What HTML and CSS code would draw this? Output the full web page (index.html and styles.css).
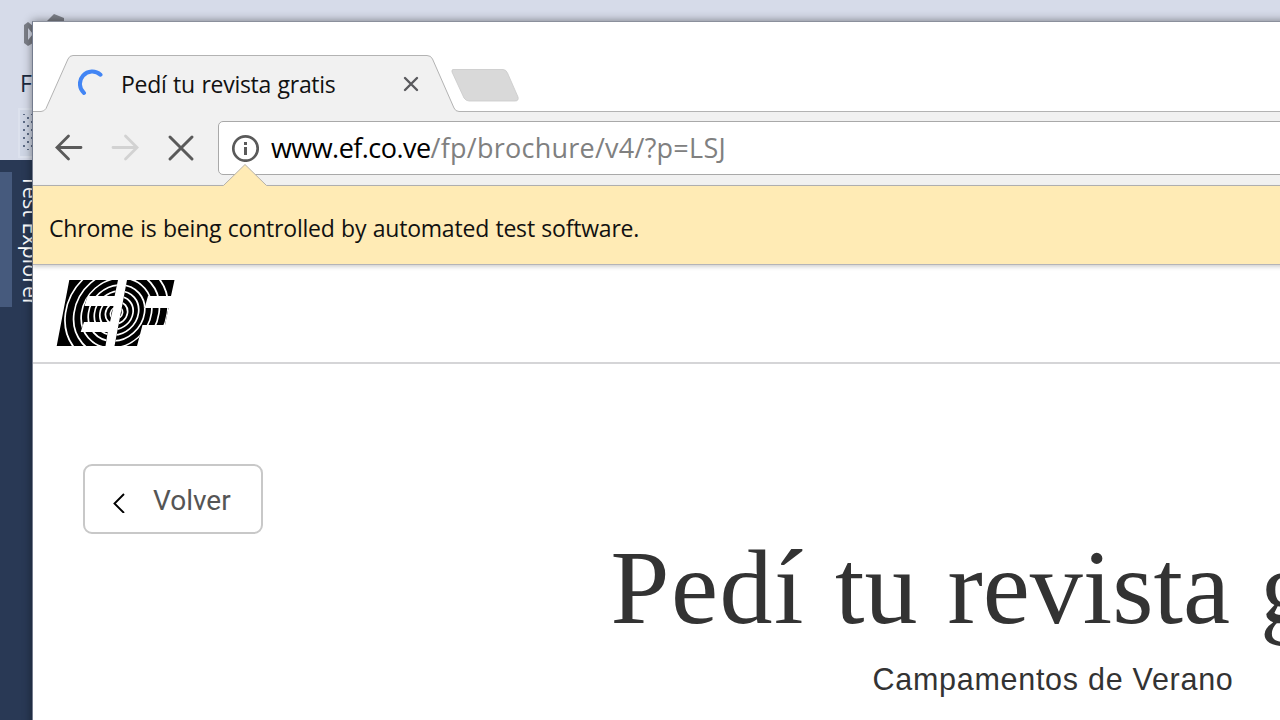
FILE: index.html
```html
<!DOCTYPE html>
<html lang="es">
<head>
<meta charset="utf-8">
<title>Pedí tu revista gratis</title>
<link rel="stylesheet" href="styles.css">
</head>
<body>
<div class="desktop">
  <div class="ide-top">
    <svg class="ide-logo" width="70" height="60" viewBox="0 0 70 60"><path d="M24 25l4-3 5 4v17l-5 3-4-3z" fill="#7c7f88"/><path d="M28 28v12l5-6z" fill="#d6dbe9"/><path d="M46 22l8-8 10 4v5z" fill="#7c7f88"/></svg>
    <span class="ide-menu">File</span>
    <div class="ide-tool"></div>
  </div>
  <div class="ide-side"><div class="side-mark"></div><span class="side-label">Test Explorer</span></div>

  <div class="window">
    <div class="tabstrip">
      <svg class="tabs-shape" width="2040" height="90" viewBox="0 0 2040 90">
        <path d="M0 89.500H8Q11 89.500 13 86.500L35 37Q36.500 33.500 40 33.500H394Q398 33.500 399.500 37L421 86Q422.500 89.500 426 89.500H2040V91H0Z" fill="#f1f1f1" stroke="#b3b3b3"/>
        <path d="M420 47.500H470Q473 47.500 474.500 51L485 75Q486 79 482 79H436Q433 79 431 76L419 50Q418.500 47.500 420 47.500Z" fill="#d9d9d9" stroke="#c9c9c9" stroke-width=".8"/>
      </svg>
      <div class="tab">
        <svg class="spinner" width="26" height="30" viewBox="0 0 26 30"><path d="M22.500 5.700A11.500 11.500 0 1 0 6 24" fill="none" stroke="#4285f4" stroke-width="4" stroke-linecap="round"/></svg>
        <span class="tab-title">Pedí tu revista gratis</span>
        <svg class="tab-close" width="16" height="16" viewBox="0 0 16 16"><path d="M2 2l12 12M14 2L2 14" stroke="#5a5a5e" stroke-width="2.400" stroke-linecap="round"/></svg>
      </div>
    </div>
    <div class="toolbar">
      <svg class="nav" width="28" height="28" viewBox="0 0 28 28"><path d="M26 13.500H2.500M13.500 2L2 13.500l11.500 11.500" fill="none" stroke="#5a5a5a" stroke-width="2.800" stroke-linecap="round"/></svg>
      <svg class="nav" width="28" height="28" viewBox="0 0 28 28"><path d="M2 13.500h23.500M14.500 2L26 13.500 14.500 25" fill="none" stroke="#d2d2d2" stroke-width="2.800" stroke-linecap="round"/></svg>
      <svg class="nav" width="28" height="28" viewBox="0 0 28 28"><path d="M3 3l22 22M25 3L3 25" stroke="#5a5a5a" stroke-width="3" stroke-linecap="round"/></svg>
      <div class="omnibox">
        <svg class="info" width="28" height="28" viewBox="0 0 28 28"><circle cx="14.500" cy="14.500" r="12.200" fill="none" stroke="#5a5a5a" stroke-width="2.700"/><path d="M13 8h3v3h-3zM13 13h3v8h-3z" fill="#5a5a5a"/></svg>
        <span class="url"><span class="host">www.ef.co.ve</span><span class="path">/fp/brochure/v4/?p=LSJ</span></span>
      </div>
    </div>
    <div class="infobar">
      <svg class="infobar-arrow" width="44" height="22" viewBox="0 0 44 22"><path d="M0 22L.5 21.500 22 .500 43.500 21.500 44 22z" fill="#ffebb5"/><path d="M.5 21.500L22 .500l21.500 21" fill="none" stroke="#b5b1aa"/></svg>
      <span class="infobar-text">Chrome is being controlled by automated test software.</span>
    </div>
    <div class="page">
      <header class="site-header">
        <svg class="ef" width="150" height="85" viewBox="0 0 150 85">
          <defs>
            <clipPath id="e"><path d="M29.300 10H78l-3.400 16H47.500l-3 10h29L70 52H44l-3.300 10h27L65.500 76H16.700z"/></clipPath>
            <clipPath id="f"><path d="M87 10h47.500L131 26h-23l-3.500 12h24L125 55h-22.500L97 76H74.500z"/></clipPath>
            <g id="rings" fill="none" stroke="#fff" stroke-width="1.700" transform="translate(76.500 43) skewX(-8)">
              <circle r="6"/><circle r="11"/><circle r="16.500"/><circle r="22"/><circle r="28"/><circle r="35"/><circle r="42.500"/><circle r="51"/>
            </g>
          </defs>
          <g clip-path="url(#e)"><path d="M0 0h150v85H0z"/><use href="#rings"/></g>
          <g clip-path="url(#f)"><path d="M0 0h150v85H0z"/><use href="#rings"/></g>
        </svg>
      </header>
      <main class="content">
        <div class="back"><svg width="12" height="20" viewBox="0 0 12 20"><path d="M11 1L1.500 10.500 11 20" fill="none" stroke="#000" stroke-width="1.900"/></svg><span class="back-text">Volver</span></div>
        <h1 class="title"><span class="title-lead">Pedí</span> tu revista gratis</h1>
        <p class="subtitle">Campamentos de Verano</p>
      </main>
    </div>
  </div>
</div>
</body>
</html>
```
FILE: styles.css
```css
* { box-sizing: border-box; }
body { margin: 0; overflow: hidden; }
.desktop { position: relative; width: 1280px; height: 720px; overflow: hidden; background: #293955; font-family: "Open Sans", "Noto Sans", sans-serif; }
.ide-top { height: 160px; background: #d6dbe9; display: flex; flex-direction: column; }
.ide-logo { display: block; height: 60px; }
.ide-menu { height: 48px; padding-left: 20px; font-size: 23px; line-height: 47px; color: #1b293e; }
.ide-tool { width: 40px; height: 50px; margin-left: 18px; border: 2px solid #dce1ed; background: radial-gradient(circle, #5d6c87 1px, transparent 1.400px) 1px 0 / 8px 8px content-box, radial-gradient(circle, #5d6c87 1px, transparent 1.400px) 5px 4px / 8px 8px content-box, #cfd6e5; padding: 4px 0 6px 3px; }
.ide-side { display: flex; gap: 6px; padding-top: 12px; height: 560px; }
.side-mark { width: 12px; height: 135px; background: #465a7d; }
.side-label { writing-mode: vertical-rl; font-size: 21.500px; line-height: 26px; color: #fff; white-space: nowrap; padding-top: 3px; }
.window { position: absolute; left: 32px; top: 21px; width: 2041px; height: 720px; background: #fff; border-left: 1px solid #747c8e; border-top: 1px solid #8b909c; box-shadow: 0 0 9px rgba(0,0,0,.45); }
.tabstrip { position: relative; height: 90px; }
.tabs-shape { position: absolute; left: 0; top: 0; }
.tab { position: relative; display: flex; align-items: center; padding: 33px 0 0 45px; height: 90px; width: 420px; }
.tab-title { margin-left: 17px; font-size: 23px; line-height: 30px; letter-spacing: -.3px; word-spacing: 1px; color: #111; white-space: nowrap; width: 282px; }
.spinner, .tab-close, .nav, .info { flex: none; }
.toolbar { height: 74px; background: #f1f1f1; border-bottom: 1px solid #b3b3b3; display: flex; align-items: flex-start; padding-left: 22px; }
.nav { margin: 22px 28px 0 0; }
.omnibox { margin: 9px 0 0 -5px; width: 1800px; height: 54px; border: 1px solid #a9a9a9; border-radius: 5px; background: #fff; display: flex; align-items: center; padding-left: 12px; }
.url { margin-left: 12px; font-size: 27px; line-height: 36px; white-space: nowrap; }
.host { color: #000; letter-spacing: -.55px; }
.path { color: #808080; letter-spacing: .25px; }
.infobar { position: relative; height: 79px; background: #ffebb5; border-bottom: 1px solid #b4b4b8; box-shadow: 0 2px 4px rgba(0,0,0,.18); padding: 25px 0 0 16px; z-index: 1; }
.infobar-arrow { position: absolute; left: 190px; top: -22px; }
.infobar-text { font-size: 23px; line-height: 34px; letter-spacing: -.2px; word-spacing: .6px; color: #111; white-space: nowrap; display: block; }
.site-header { height: 99px; border-bottom: 2px solid #d5d5d7; padding: 5px 0 0 7px; }
.ef { display: block; }
.content { padding-top: 100px; display: flex; flex-direction: column; align-items: center; font-family: "Liberation Sans", Arial, sans-serif; }
.back { align-self: flex-start; margin-left: 50px; width: 180px; height: 70px; border: 2px solid #c8c8c8; border-radius: 9px; display: flex; align-items: center; padding: 7px 0 0 28px; color: #555; }
.back-text { font-family: Roboto, sans-serif; font-weight: 400; font-size: 28px; margin: -4px 0 0 28px; }
.title { margin: -6px 0 0; font: 400 106px/120px "Liberation Serif", serif; word-spacing: 3.500px; color: #333; height: 120px; white-space: nowrap; }
.title-lead { letter-spacing: 1.500px; }
.subtitle { margin: 13px 0 0; font-size: 30.500px; line-height: 36px; letter-spacing: .72px; color: #333; }
```
